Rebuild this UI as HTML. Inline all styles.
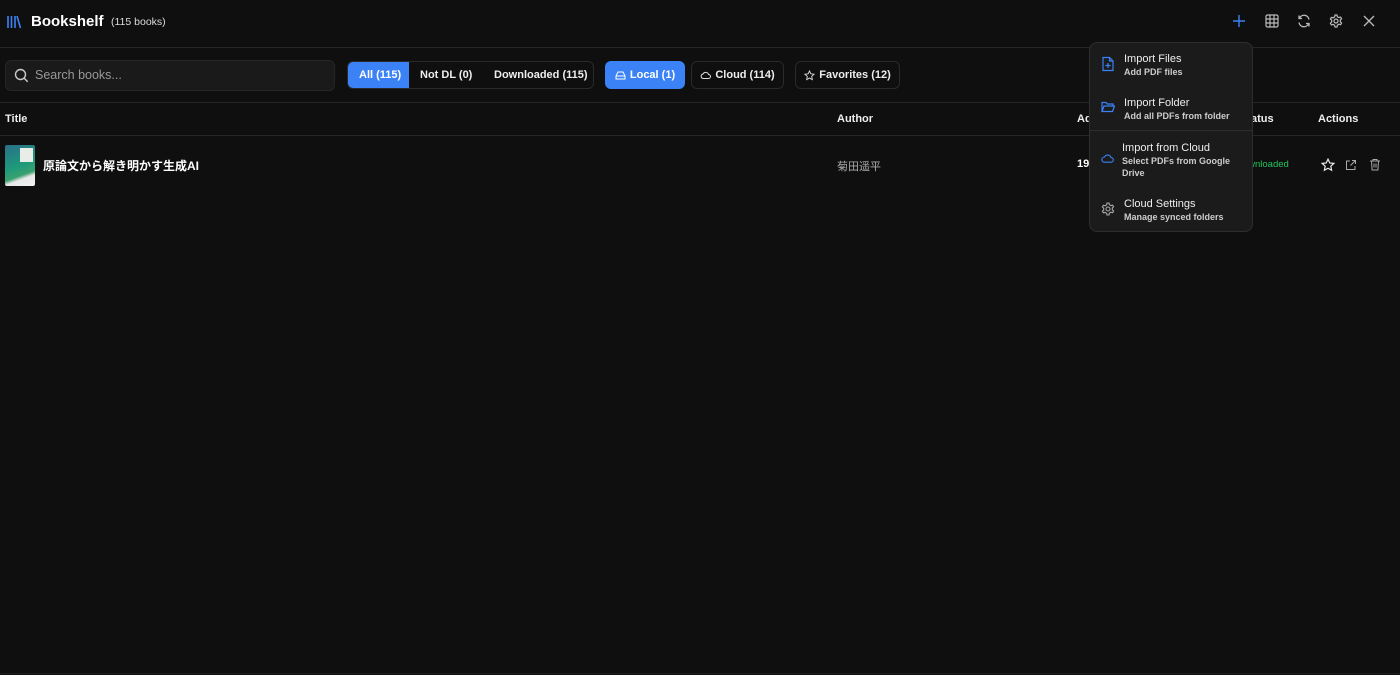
<!DOCTYPE html>
<html><head><meta charset="utf-8"><style>
*{box-sizing:border-box;margin:0;padding:0}
body{width:1400px;height:675px;background:#0f0f0f;color:#fff;font-family:"Liberation Sans","Noto Sans CJK JP",sans-serif;position:relative;overflow:hidden;font-size:11px}
.a{position:absolute}
.line{position:absolute;left:0;width:1400px;height:1px;background:#262626}
.btn{position:absolute;top:61px;height:28px;border:1px solid #2a2a2a;border-radius:6px;font-weight:bold;font-size:11px;display:flex;align-items:center;justify-content:center;gap:4px;color:#eee}
svg{display:block}
.mi{position:absolute;left:1124px;font-size:11px;color:#eee}
.ms{position:absolute;left:1124px;font-size:9px;color:#ccc;font-weight:bold}
.th{position:absolute;top:113px;font-weight:bold;font-size:11px;color:#eee}
</style></head><body>
<svg class="a" style="left:6px;top:14px" width="16" height="16" viewBox="0 0 16 16" fill="none" stroke="#3b82f6" stroke-width="1.6"><path d="M2 2v12M5.5 2v12M9 2v12M11 2l3.5 12"/></svg>
<div class="a" style="left:31px;top:13px;font-size:15px;font-weight:bold">Bookshelf</div>
<div class="a" style="left:111px;top:16px;font-size:10.5px;color:#ddd">(115 books)</div>
<svg class="a" style="left:1232px;top:14px" width="14" height="14" viewBox="0 0 14 14" stroke="#3b82f6" stroke-width="1.4"><path d="M7 1v12M1 7h12"/></svg>
<svg class="a" style="left:1265px;top:14px" width="14" height="14" viewBox="0 0 14 14" fill="none" stroke="#bbb" stroke-width="1.2"><rect x="1" y="1" width="12" height="12" rx="1.5"/><path d="M1 5h12M1 9h12M5 1v12M9 1v12"/></svg>
<svg class="a" style="left:1297px;top:14px" width="14" height="14" viewBox="0 0 14 14" fill="none" stroke="#bbb" stroke-width="1.3"><path d="M12 5.5A5 5 0 0 0 2.6 4M2 1.5V4.5h3M2 8.5A5 5 0 0 0 11.4 10M12 12.5V9.5H9"/></svg>
<svg class="a" style="left:1329px;top:14px" width="14" height="14" viewBox="0 0 14 14" fill="none" stroke="#bbb" stroke-width="1.2"><circle cx="7" cy="7" r="2"/><path d="M6 1h2l.4 1.7 1.5.9 1.7-.5 1 1.7-1.3 1.2v1.8l1.3 1.2-1 1.7-1.7-.5-1.5.9L8 13H6l-.4-1.7-1.5-.9-1.7.5-1-1.7L2.7 8V6.2L1.4 5l1-1.7 1.7.5 1.5-.9z"/></svg>
<svg class="a" style="left:1363px;top:15px" width="12" height="12" viewBox="0 0 12 12" stroke="#bbb" stroke-width="1.3"><path d="M1 1l10 10M11 1L1 11"/></svg>
<div class="line" style="top:47px"></div>
<div class="a" style="left:5px;top:60px;width:330px;height:31px;background:#1a1a1a;border:1px solid #262626;border-radius:6px"></div>
<svg class="a" style="left:14px;top:68px" width="15" height="15" viewBox="0 0 15 15" fill="none" stroke="#ccc" stroke-width="1.4"><circle cx="6.5" cy="6.5" r="5"/><path d="M10.2 10.2l3.5 3.5"/></svg>
<div class="a" style="left:35px;top:68px;font-size:12.5px;color:#999">Search books...</div>
<div class="a" style="left:347px;top:61px;width:247px;height:28px;border:1px solid #2a2a2a;border-radius:6px;overflow:hidden">
<div class="a" style="left:0;top:0;width:61px;height:28px;background:#3b82f6"></div></div>
<div class="a" style="left:359px;top:69px;font-weight:bold">All (115)</div>
<div class="a" style="left:420px;top:69px;font-weight:bold;color:#eee">Not DL (0)</div>
<div class="a" style="left:494px;top:69px;font-weight:bold;color:#eee">Downloaded (115)</div>
<div class="btn" style="left:605px;width:80px;background:#3b82f6;border-color:#3b82f6;color:#fff"><svg width="11" height="9" viewBox="0 0 11 9" fill="none" stroke="#fff" stroke-width="1"><path d="M1 5l2-4h5l2 4v3H1zM1 5h9"/></svg>Local (1)</div>
<div class="btn" style="left:691px;width:93px"><svg width="11" height="8" viewBox="0 0 11 8" fill="none" stroke="#ddd" stroke-width="1"><path d="M3 7.5a2.3 2.3 0 0 1 0-4.5 3 3 0 0 1 5.5.5 2 2 0 0 1 0 4z"/></svg>Cloud (114)</div>
<div class="btn" style="left:795px;width:105px"><svg width="11" height="11" viewBox="0 0 12 12" fill="none" stroke="#ddd" stroke-width="1"><path d="M6 1l1.5 3.2 3.5.4-2.6 2.4.7 3.5L6 8.8 2.9 10.5l.7-3.5L1 4.6l3.5-.4z"/></svg>Favorites (12)</div>
<div class="line" style="top:102px"></div>
<div class="th" style="left:5px">Title</div>
<div class="th" style="left:837px">Author</div>
<div class="th" style="left:1077px">Added</div>
<div class="th" style="left:1240px">Status</div>
<div class="th" style="left:1318px">Actions</div>
<div class="line" style="top:135px"></div>
<div class="a" style="left:5px;top:145px;width:30px;height:41px;border-radius:2px;background:linear-gradient(160deg,#2a6f8a,#1e9a7a 50%,#3aa070 70%,#e8e8e8 78%,#f2f2f2)"></div>
<div class="a" style="left:20px;top:148px;width:13px;height:14px;background:#e8ede8"></div>
<div class="a" style="left:43px;top:157px;font-size:12px;font-weight:bold">原論文から解き明かす生成AI</div>
<div class="a" style="left:837px;top:158px;font-size:11px;color:#aaa">菊田遥平</div>
<div class="a" style="left:1077px;top:158px;font-size:11px;font-weight:bold">1970/01/01</div>
<div class="a" style="left:1236px;top:159px;font-size:9.5px;color:#22c55e">Downloaded</div>
<svg class="a" style="left:1321px;top:158px" width="14" height="14" viewBox="0 0 12 12" fill="none" stroke="#eee" stroke-width="1"><path d="M6 1l1.5 3.2 3.5.4-2.6 2.4.7 3.5L6 8.8 2.9 10.5l.7-3.5L1 4.6l3.5-.4z"/></svg>
<svg class="a" style="left:1345px;top:159px" width="12" height="12" viewBox="0 0 12 12" fill="none" stroke="#aaa" stroke-width="1"><path d="M5 2H1.5v8.5H10V7M7 1.5h3.5V5M10.5 1.5L5.5 6.5"/></svg>
<svg class="a" style="left:1369px;top:158px" width="12" height="13" viewBox="0 0 12 13" fill="none" stroke="#aaa" stroke-width="1"><path d="M1 3h10M4 3V1.5h4V3M2.5 3l.6 9h5.8l.6-9M5 5.5v4M7 5.5v4"/></svg>
<div class="line" style="top:673px;background:#1f1f1f"></div>
<div class="a" style="left:1089px;top:42px;width:164px;height:190px;background:#1b1b1b;border:1px solid #2e2e2e;border-radius:8px"></div>
<div class="a" style="left:1090px;top:130px;width:162px;height:1px;background:#2e2e2e"></div>
<svg class="a" style="left:1102px;top:56px" width="12" height="16" viewBox="0 0 12 16" fill="none" stroke="#3b82f6" stroke-width="1.2"><path d="M1 1.5h6.5L11 5v9.5H1zM7.5 1.5V5H11M6 7v5M3.5 9.5h5"/></svg>
<div class="mi" style="top:53px">Import Files</div><div class="ms" style="top:67px">Add PDF files</div>
<svg class="a" style="left:1101px;top:101px" width="14" height="12" viewBox="0 0 14 12" fill="none" stroke="#3b82f6" stroke-width="1.2"><path d="M1 10.5V1.5h4l1.2 1.5H12v2M1 10.5l2-5.5h10.5l-2 5.5z"/></svg>
<div class="mi" style="top:97px">Import Folder</div><div class="ms" style="top:111px">Add all PDFs from folder</div>
<svg class="a" style="left:1101px;top:153px" width="13" height="10" viewBox="0 0 13 10" fill="none" stroke="#3b82f6" stroke-width="1.1"><path d="M3.5 9.2a2.6 2.6 0 0 1 0-5.2 3.5 3.5 0 0 1 6.5.6 2.3 2.3 0 0 1 0 4.6z"/></svg>
<div class="mi" style="top:142px;left:1122px">Import from Cloud</div><div class="ms" style="top:156px;left:1122px;line-height:11.5px">Select PDFs from Google<br>Drive</div>
<svg class="a" style="left:1101px;top:202px" width="14" height="14" viewBox="0 0 14 14" fill="none" stroke="#aaa" stroke-width="1.1"><circle cx="7" cy="7" r="2"/><path d="M6 1h2l.4 1.7 1.5.9 1.7-.5 1 1.7-1.3 1.2v1.8l1.3 1.2-1 1.7-1.7-.5-1.5.9L8 13H6l-.4-1.7-1.5-.9-1.7.5-1-1.7L2.7 8V6.2L1.4 5l1-1.7 1.7.5 1.5-.9z"/></svg>
<div class="mi" style="top:198px">Cloud Settings</div><div class="ms" style="top:212px">Manage synced folders</div>
</body></html>
